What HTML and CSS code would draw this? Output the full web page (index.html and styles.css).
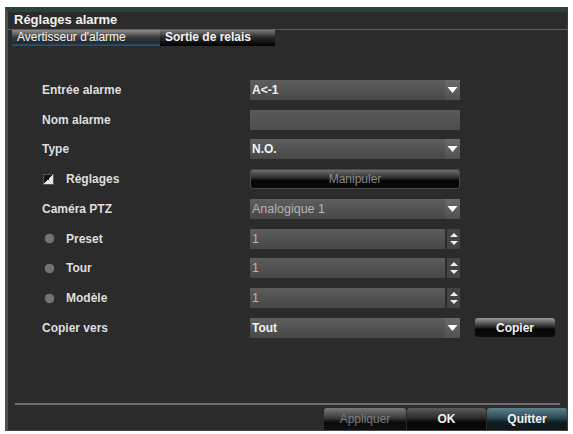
FILE: index.html
```html
<!DOCTYPE html>
<html lang="fr">
<head>
<meta charset="utf-8">
<title>Réglages alarme</title>
<link rel="stylesheet" href="styles.css">
</head>
<body>
<div class="dialog">
  <div class="title">Réglages alarme</div>
  <div class="tabs">
    <div class="tab active">Avertisseur d'alarme</div>
    <div class="tab">Sortie de relais</div>
  </div>
  <div class="form">
    <div class="row">
      <div class="label">Entrée alarme</div>
      <div class="field select"><span class="val">A&lt;-1</span><span class="arrow"><svg width="11" height="8" viewBox="0 0 11 8"><polygon points="0.5,1 10.5,1 5.5,7" fill="#fff"/></svg></span></div>
    </div>
    <div class="row">
      <div class="label">Nom alarme</div>
      <div class="field plain"></div>
    </div>
    <div class="row">
      <div class="label">Type</div>
      <div class="field select"><span class="val">N.O.</span><span class="arrow"><svg width="11" height="8" viewBox="0 0 11 8"><polygon points="0.5,1 10.5,1 5.5,7" fill="#fff"/></svg></span></div>
    </div>
    <div class="row">
      <div class="label sub"><span class="check"></span>Réglages</div>
      <div class="btn wide">Manipuler</div>
    </div>
    <div class="row">
      <div class="label">Caméra PTZ</div>
      <div class="field select"><span class="val dim">Analogique 1</span><span class="arrow"><svg width="11" height="8" viewBox="0 0 11 8"><polygon points="0.5,1 10.5,1 5.5,7" fill="#fff"/></svg></span></div>
    </div>
    <div class="row">
      <div class="label sub"><span class="radio"></span>Preset</div>
      <div class="spin"><span class="box"><span class="val dim">1</span></span><span class="spinbtn"><svg width="10" height="16" viewBox="0 0 10 16"><polygon points="1,6 9,6 5,2" fill="#eee"/><polygon points="1,10 9,10 5,14" fill="#eee"/></svg></span></div>
    </div>
    <div class="row">
      <div class="label sub"><span class="radio"></span>Tour</div>
      <div class="spin"><span class="box"><span class="val dim">1</span></span><span class="spinbtn"><svg width="10" height="16" viewBox="0 0 10 16"><polygon points="1,6 9,6 5,2" fill="#eee"/><polygon points="1,10 9,10 5,14" fill="#eee"/></svg></span></div>
    </div>
    <div class="row">
      <div class="label sub"><span class="radio"></span>Modèle</div>
      <div class="spin"><span class="box"><span class="val dim">1</span></span><span class="spinbtn"><svg width="10" height="16" viewBox="0 0 10 16"><polygon points="1,6 9,6 5,2" fill="#eee"/><polygon points="1,10 9,10 5,14" fill="#eee"/></svg></span></div>
    </div>
    <div class="row">
      <div class="label">Copier vers</div>
      <div class="field select"><span class="val">Tout</span><span class="arrow"><svg width="11" height="8" viewBox="0 0 11 8"><polygon points="0.5,1 10.5,1 5.5,7" fill="#fff"/></svg></span></div>
      <div class="btn copy">Copier</div>
    </div>
  </div>
  <div class="footer">
    <div class="sep"></div>
    <div class="actions">
      <div class="abtn disabled">Appliquer</div>
      <div class="abtn">OK</div>
      <div class="abtn focus">Quitter</div>
    </div>
  </div>
</div>
</body>
</html>
```
FILE: styles.css
```css
html, body {
  margin: 0;
  padding: 0;
  background: #ffffff;
}

body {
  font-family: "Liberation Sans", Arial, sans-serif;
  color: #e4e4e4;
}

.dialog {
  box-sizing: border-box;
  margin: 7px 0 0 5px;
  width: 563px;
  height: 424px;
  background: #2b2b2b;
  border-top: 5px solid #2a4234;
  border-left: 3px solid #46524a;
  border-right: 1px solid #3c3c3c;
  border-bottom: 1px solid #444;
  display: flex;
  flex-direction: column;
}

.title {
  height: 17px;
  line-height: 15px;
  padding-left: 6px;
  font-size: 13px;
  font-weight: bold;
  color: #f0f0f0;
}

.tabs {
  border-top: 1px solid #5c5c5c;
  height: 16px;
  display: flex;
  padding-left: 4px;
}

.tab {
  height: 16px;
  line-height: 15px;
  font-size: 12px;
  color: #f4f4f4;
  padding: 0 6px 0 5px;
  background: linear-gradient(#7a7a7a, #2a2a2a 45%, #000 100%);
}

.tab.active {
  width: 137px;
  background: linear-gradient(#909090, #3c3c3c 45%, #1b2a38 80%, #2c5a7c 100%);
}

.tab:nth-child(2) {
  width: 104px;
  font-weight: bold;
}

.form {
  flex: 1;
  padding-top: 29px;
  padding-left: 34px;
}

.row {
  height: 29.75px;
  display: flex;
  align-items: center;
}

.label {
  width: 208px;
  font-size: 12px;
  font-weight: bold;
  color: #dedede;
  display: flex;
  align-items: center;
}

.label.sub {
  margin-left: 1px;
  width: 207px;
}

.check {
  width: 9px;
  height: 9px;
  margin-right: 12px;
  border: 1px solid #555;
  background: linear-gradient(135deg, #151515 50%, #e8e8e8 50%);
}

.radio {
  width: 9px;
  height: 9px;
  margin: 0 12px 0 2px;
  border-radius: 50%;
  background: #727272;
  box-shadow: 0 0 1px #888;
}

.field {
  box-sizing: border-box;
  width: 210px;
  height: 20px;
  display: flex;
  align-items: center;
  font-size: 12px;
  font-weight: bold;
  color: #f2f2f2;
}

.field.plain {
  background: linear-gradient(#5a5a5a, #4c4c4c);
}

.field.select {
  background: linear-gradient(#5e5e5e, #474747);
}

.val {
  flex: 1;
  padding-left: 2px;
}

.val.dim {
  color: #b4b4b4;
  font-weight: normal;
  font-size: 12.5px;
}

.arrow {
  width: 15px;
  height: 20px;
  display: flex;
  align-items: center;
  justify-content: center;
  background: linear-gradient(#6a6a6a, #505050);
}

.spin {
  width: 210px;
  height: 20px;
  display: flex;
  align-items: center;
}

.box {
  width: 195px;
  height: 20px;
  display: flex;
  align-items: center;
  background: linear-gradient(#5c5c5c, #474747);
  font-size: 12px;
}

.spinbtn {
  width: 13px;
  margin-left: 2px;
  height: 20px;
  display: flex;
  align-items: center;
  justify-content: center;
  background: #444444;
}

.btn {
  box-sizing: border-box;
  height: 20px;
  display: flex;
  align-items: center;
  justify-content: center;
  border-radius: 3px;
  font-size: 12px;
}

.btn.wide {
  width: 210px;
  color: #8a8a8a;
  border: 1px solid #4a4a4a;
  background: linear-gradient(#6e6e6e, #2a2a2a 45%, #050505 60%, #0a0a0a);
}

.btn.copy {
  width: 80px;
  height: 19px;
  margin-left: 15px;
  color: #f4f4f4;
  font-weight: bold;
  background: linear-gradient(#9a9a9a, #3a3a3a 40%, #050505 60%, #0c0c0c);
}

.footer {
  display: flex;
  flex-direction: column;
}

.sep {
  height: 2px;
  margin: 0 7px;
  background: #6e6e6e;
}

.actions {
  margin-top: 3px;
  height: 22px;
  display: flex;
  justify-content: flex-end;
  gap: 1px;
}

.abtn {
  width: 79px;
  height: 22px;
  line-height: 22px;
  text-align: center;
  font-size: 12px;
  font-weight: bold;
  color: #f2f2f2;
  border-radius: 3px 3px 0 0;
  background: linear-gradient(#5c5c5c, #2c2c2c 45%, #060606 65%, #0c0c0c);
}

.abtn.disabled {
  width: 82px;
  color: #7c7c7c;
  font-weight: normal;
  background: linear-gradient(#7a7a7a, #3a3a3a 45%, #0a0a0a 65%, #101010);
}

.abtn.focus {
  width: 80px;
  background: linear-gradient(#5d7f8c, #2e4a55 45%, #0f1d24 65%, #10181c);
}
```
